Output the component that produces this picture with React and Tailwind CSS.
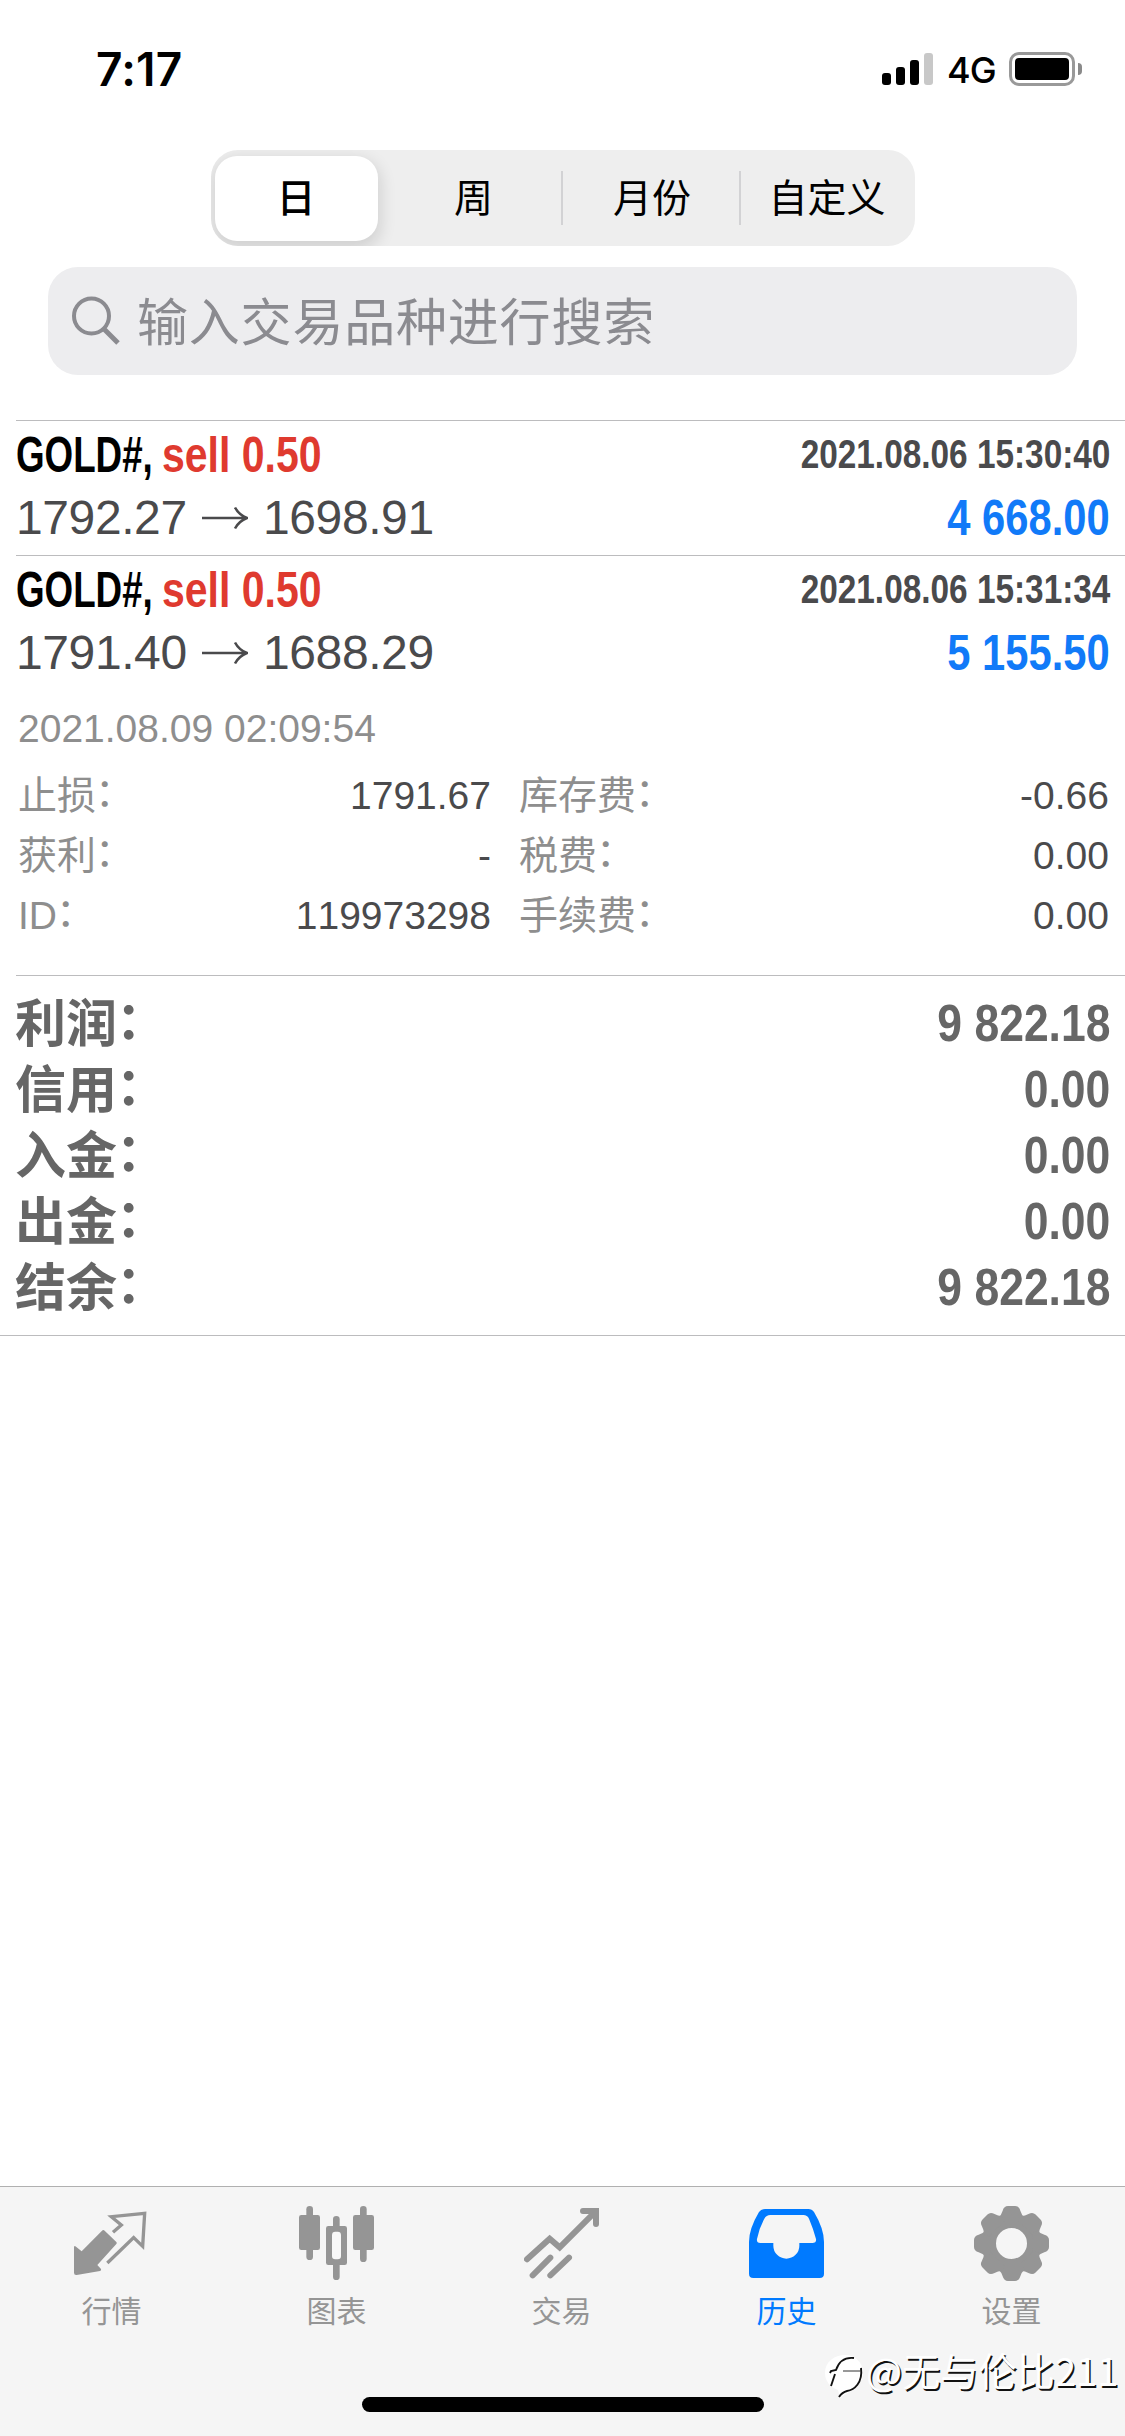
import React from 'react';

const deals = [
  { time: '2021.08.06 15:30:40', open: '1792.27', close: '1698.91', profit: '4 668.00' },
  { time: '2021.08.06 15:31:34', open: '1791.40', close: '1688.29', profit: '5 155.50' },
];

const details = [
  ['止损', '1791.67', '库存费', '-0.66'],
  ['获利', '-', '税费', '0.00'],
  ['ID', '119973298', '手续费', '0.00'],
];

const summary = [
  ['利润', '9 822.18'],
  ['信用', '0.00'],
  ['入金', '0.00'],
  ['出金', '0.00'],
  ['结余', '9 822.18'],
];

const QuotesIcon = () => (
  <svg viewBox="0 0 225 225" className="w-[75px] h-[75px]" fill="currentColor">
    <path d="M84 74Q88 70 92 74L127 108Q130 111 127 114L70 177L81 189Q83 193 78 195L8 207Q0 208 0 200V123Q1 118 6 122L23 136Z" />
    <path d="M117 79L142 57L112 32L212 22L206 121L179 95L100 171" fill="none" stroke="currentColor" strokeWidth="10" />
  </svg>
);

const ChartIcon = () => (
  <svg viewBox="0 0 225 225" className="w-[75px] h-[75px]" fill="currentColor">
    <rect x="22" y="0" width="20" height="162" rx="10" />
    <rect x="0" y="27" width="63" height="105" rx="7" />
    <rect x="102" y="30" width="20" height="192" rx="10" />
    <rect x="81" y="60" width="63" height="117" rx="7" />
    <rect x="99" y="77" width="27" height="83" rx="10" fill="#f8f8f8" />
    <rect x="183" y="0" width="20" height="168" rx="10" />
    <rect x="162" y="27" width="63" height="105" rx="7" />
  </svg>
);

const TradeIcon = () => (
  <svg viewBox="0 0 225 225" className="w-[75px] h-[75px]" fill="none" stroke="currentColor" strokeWidth="18" strokeLinecap="round">
    <path d="M9 160L77 98L107 124L212 19" />
    <path d="M177 15H216V54" />
    <path d="M26 208L79 155M79 208L135 155" />
  </svg>
);

const HistoryIcon = () => (
  <svg viewBox="0 0 225 225" className="w-[75px] h-[75px]" fill="currentColor">
    <path
      fillRule="evenodd"
      d="M48 9H178Q189 9 195 18Q225 68 225 108V203Q225 216 212 216H13Q0 216 0 203V108Q0 68 30 18Q36 9 48 9ZM64 27Q52 27 46 38Q30 68 24 99Q22 111 34 111H73V119A39 39 0 0 0 151 119V111H190Q203 111 201 99Q192 66 180 38Q175 27 163 27Z"
    />
  </svg>
);

const SettingsIcon = () => (
  <svg viewBox="0 0 225 225" className="w-[75px] h-[75px]" fill="currentColor">
    <circle cx="112.5" cy="112.5" r="66.5" fill="none" stroke="currentColor" strokeWidth="40" />
    {[0, 45, 90, 135, 180, 225, 270, 315].map((angle) => (
      <path
        key={angle}
        transform={`rotate(${angle} 112.5 112.5)`}
        d="M74 34Q82 27 86 14Q90 0 102 0H123Q135 0 139 14Q143 27 151 34L145 50H80Z"
      />
    ))}
  </svg>
);

const tabs = [
  { label: '行情', Icon: QuotesIcon },
  { label: '图表', Icon: ChartIcon },
  { label: '交易', Icon: TradeIcon },
  { label: '历史', Icon: HistoryIcon, active: true },
  { label: '设置', Icon: SettingsIcon },
];

const StatusBar = () => (
  <div className="h-[150px] pl-[96px] pr-[43px] pt-[38px] flex items-start justify-between text-black font-[Inter,sans-serif]">
    <span className="text-[46px] leading-[62px] font-semibold tracking-[0.2px]">7:17</span>
    <div className="flex items-center h-[62px]">
      <div className="flex items-end gap-[5px] h-[32px]">
        <i className="w-[9px] h-[12px] rounded-[3px] bg-black" />
        <i className="w-[9px] h-[18px] rounded-[3px] bg-black" />
        <i className="w-[9px] h-[25px] rounded-[3px] bg-black" />
        <i className="w-[9px] h-[32px] rounded-[3px] bg-[#c8c8c8]" />
      </div>
      <span className="ml-[14px] w-[62px] text-[36px] leading-[62px] pt-[2px] font-medium tracking-[-0.8px]">4G</span>
      <div className="w-[66px] h-[34px] rounded-[10px] border-[3px] border-[#999] p-[3px]">
        <div className="w-full h-full rounded-[4px] bg-black" />
      </div>
      <i className="ml-[3px] w-[4px] h-[12px] rounded-r-full bg-[#8a8a8a]" />
    </div>
  </div>
);

const Periods = () => (
  <div className="mx-auto w-[704px] h-[96px] flex items-center rounded-[27px] bg-[#eeeeee] px-[4px] overflow-hidden text-[39px] leading-[56px] text-black">
    <div className="shrink-0 w-[163px] mr-px h-[85px] flex items-center justify-center pt-[2px] rounded-[22px] bg-white font-medium shadow-[0_6px_16px_3px_rgba(0,0,0,0.12)]">日</div>
    <div className="shrink-0 w-[182px] pl-[8px] pt-[2px] text-center">周</div>
    <div className="shrink-0 w-[2px] h-[54px] bg-[#d2d2d4]" />
    <div className="shrink-0 w-[176px] pl-[3px] pt-[2px] text-center">月份</div>
    <div className="shrink-0 w-[2px] h-[54px] bg-[#d2d2d4]" />
    <div className="shrink-0 w-[170px] pl-[3px] pt-[2px] text-center">自定义</div>
  </div>
);

const Search = () => (
  <div className="mt-[21px] mx-[48px] h-[108px] rounded-[30px] bg-[#ededef] flex items-center pl-[23px] text-[#8b8b90]">
    <svg viewBox="0 0 50 50" className="w-[50px] h-[50px]" fill="none" stroke="currentColor" strokeWidth="4">
      <circle cx="20.5" cy="20" r="17.5" />
      <path d="M33 33L47 47" strokeWidth="5" />
    </svg>
    <span className="ml-[16px] pt-[5px] text-[51px] leading-[72px] tracking-[0.8px]">输入交易品种进行搜索</span>
  </div>
);

const Deal = ({ time, open, close, profit }) => (
  <div className="ml-[16px] pr-[15px] h-[135px] border-t border-[#bcbcbe] pt-[4px]">
    <div className="h-[61px] flex justify-between font-bold leading-[61px] whitespace-nowrap">
      <div className="flex text-[50px]">
        <span className="w-[146px] text-black origin-left scale-x-[0.735]">GOLD#,</span>
        <span className="text-[#df3a2f] origin-left scale-x-[0.82]">sell 0.50</span>
      </div>
      <span className="text-[40px] leading-[59px] text-[#4a4a4c] origin-right scale-x-[0.834]">{time}</span>
    </div>
    <div className="h-[64px] flex justify-between leading-[64px] whitespace-nowrap">
      <div className="flex items-center text-[48px] text-[#4a4a4c]">
        <span className="w-[186px] tracking-[-0.4px]">{open}</span>
        <svg viewBox="0 0 46 24" className="w-[46px] h-[24px] mr-[15px]" fill="none" stroke="currentColor" strokeWidth="2.6">
          <path d="M0 12H45M33 1.5Q37 9 45 12Q37 15 33 22.5" />
        </svg>
        <span className="tracking-[-0.4px]">{close}</span>
      </div>
      <span className="text-[50px] font-bold text-[#117af8] origin-right scale-x-[0.834]">{profit}</span>
    </div>
  </div>
);

const Label = ({ children }) => (
  <span className="text-[#8e8e8e]">
    {children}
    <span className="inline-block -translate-x-px -translate-y-[3px]">：</span>
  </span>
);

const Details = () => (
  <div className="h-[285px] pl-[18px] pr-[16px] pt-[9px] text-[39px] text-[#4a4a4c] whitespace-nowrap">
    <div className="h-[60px] leading-[60px] text-[#8e8e8e]">2021.08.09 02:09:54</div>
    <div className="pt-[7px]">
      {details.map(([l1, v1, l2, v2]) => (
        <div key={l1} className="flex h-[60px] leading-[60px]">
          <div className="w-[150px]"><Label>{l1}</Label></div>
          <span className="w-[323px] text-right [font-kerning:none]">{v1}</span>
          <div className="ml-[28px]"><Label>{l2}</Label></div>
          <span className="ml-auto">{v2}</span>
        </div>
      ))}
    </div>
  </div>
);

const Summary = () => (
  <div className="border-b border-[#bcbcbe] h-[361px]">
    <div className="ml-[16px] pr-[15px] border-t border-[#bcbcbe] pt-[15px] text-[51px] text-[#666]">
      {summary.map(([label, value]) => (
        <div key={label} className="flex justify-between h-[66px] leading-[66px] font-bold">
          <span className="-ml-px leading-[68px]">
            {label}
            <span className="inline-block -translate-x-px -translate-y-[3px]">：</span>
          </span>
          <span className="text-[52px] leading-[65px] origin-right scale-x-[0.855]">{value}</span>
        </div>
      ))}
    </div>
  </div>
);

const TabBar = () => (
  <div className="relative mt-auto h-[250px] border-t border-[#b0b0b0] bg-[#f5f5f5] flex flex-col">
    <div className="grid grid-cols-5 pt-[19px] -ml-px mr-px">
      {tabs.map(({ label, Icon, active }) => (
        <div key={label} className={active ? 'flex flex-col items-center text-[#007aff]' : 'flex flex-col items-center text-[#959595]'}>
          <Icon />
          <span className="mt-[9px] text-[30px] leading-[44px]">{label}</span>
        </div>
      ))}
    </div>
    <div className="mt-auto mb-[24px] mx-auto w-[402px] h-[15px] rounded-full bg-black" />

    {/* Watermark */}
    <div className="absolute left-[825px] top-[167px] flex items-start text-white whitespace-nowrap">
      <svg viewBox="0 0 40 46" className="w-[40px] h-[46px]">
        <path d="M20 1C30 1 38 8 38 19C38 31 27 36 15 44L13 36C5 33 0 27 0 19C0 8 9 1 20 1Z" fill="#fff" />
        <path d="M18 17H35" fill="none" stroke="#333" strokeWidth="1" />
        <path d="M6 32L10 20M5 19L6 17L11 16C14 7 20 3 29 4M36 14C38 29 29 36 22 37C18 38 16 40 14 43" fill="none" stroke="#111" strokeWidth="1.9" />
      </svg>
      <span className="ml-px -mt-[9px] text-[38.2px] leading-[50px] font-['Noto_Sans_CJK_SC',sans-serif] font-normal [text-shadow:1.5px_1.5px_0_#111]">@无与伦比211</span>
    </div>
  </div>
);

const App = () => (
  <div lang="zh-CN" className="w-[1125px] h-[2436px] bg-white flex flex-col overflow-hidden font-['Liberation_Sans','Noto_Sans_CJK_SC',sans-serif]">
    <StatusBar />
    <Periods />
    <Search />
    <div className="mt-[45px]">
      {deals.map((deal) => (
        <Deal key={deal.time} {...deal} />
      ))}
      <Details />
      <Summary />
    </div>
    <TabBar />
  </div>
);

export default App;
